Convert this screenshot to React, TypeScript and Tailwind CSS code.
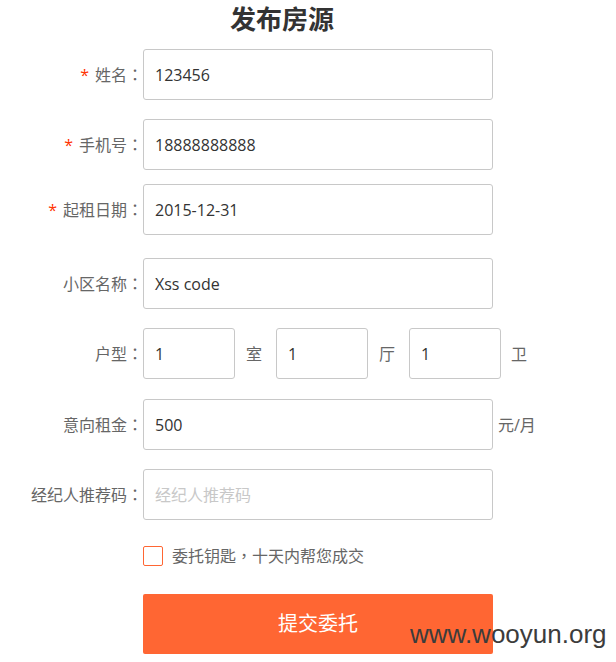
import React from "react";

const Colon = () => (
  <span className="font-['Noto_Sans_CJK_TC',sans-serif]">：</span>
);

const Label = ({ text, required }: { text: string; required?: boolean }) => (
  <div className="w-[143px] shrink-0 text-right text-[16px] text-[#666]">
    {required && <span className="mr-[6px] text-[#ff3300]">*</span>}
    {text}
    <Colon />
  </div>
);

const Field = ({ value, placeholder, w = "w-[350px]" }: { value?: string; placeholder?: string; w?: string }) => (
  <div className={`${w} h-[51px] shrink-0 border border-[#c8c8c8] rounded-[3px] flex items-center pl-[11px] text-[16px]`}>
    {value ? (
      <span className="text-[#333]">{value}</span>
    ) : (
      <span className="text-[#c8c8c8]">{placeholder}</span>
    )}
  </div>
);

export default function App() {
  return (
    <div className="relative w-[616px] h-[662px] bg-white font-['Open_Sans','Noto_Sans_CJK_SC',sans-serif] overflow-hidden">
      <h1 className="pl-[230px] text-[26px] font-bold leading-[35px] text-[#333] font-['Noto_Sans_CJK_SC',sans-serif]">
        发布房源
      </h1>

      <div className="flex items-center mt-[14px]">
        <Label text="姓名" required />
        <Field value="123456" />
      </div>

      <div className="flex items-center mt-[19px]">
        <Label text="手机号" required />
        <Field value="18888888888" />
      </div>

      <div className="flex items-center mt-[14px]">
        <Label text="起租日期" required />
        <Field value="2015-12-31" />
      </div>

      <div className="flex items-center mt-[23px]">
        <Label text="小区名称" />
        <Field value="Xss code" />
      </div>

      <div className="flex items-center mt-[19px]">
        <Label text="户型" />
        <Field value="1" w="w-[92px]" />
        <span className="ml-[11px] mr-[14px] text-[16px] text-[#666]">室</span>
        <Field value="1" w="w-[92px]" />
        <span className="ml-[11px] mr-[14px] text-[16px] text-[#666]">厅</span>
        <Field value="1" w="w-[92px]" />
        <span className="ml-[10px] text-[16px] text-[#666]">卫</span>
      </div>

      <div className="flex items-center mt-[20px]">
        <Label text="意向租金" />
        <Field value="500" />
        <span className="ml-[5px] text-[16px] text-[#666]">元/月</span>
      </div>

      <div className="flex items-center mt-[19px]">
        <Label text="经纪人推荐码" />
        <Field placeholder="经纪人推荐码" />
      </div>

      <div className="flex items-center mt-[25px] pl-[143px]">
        <div className="w-[20px] h-[20px] border border-[#ff6633] rounded-[2px] shrink-0" />
        <span className="ml-[9px] text-[16px] text-[#666] leading-[20px]">
          委托钥匙<span className="font-['Noto_Sans_CJK_TC',sans-serif]">，</span>十天内帮您成交
        </span>
      </div>

      <div className="pl-[143px] mt-[28px]">
        <div className="w-[350px] h-[60px] bg-[#ff6633] rounded-[2px] flex items-center justify-center text-white text-[20px]">
          提交委托
        </div>
      </div>

      <div className="absolute left-[410px] top-[621px] text-[26px] leading-none text-[#3c3c3c] font-['Liberation_Sans',sans-serif]">
        www.wooyun.org
      </div>
    </div>
  );
}
